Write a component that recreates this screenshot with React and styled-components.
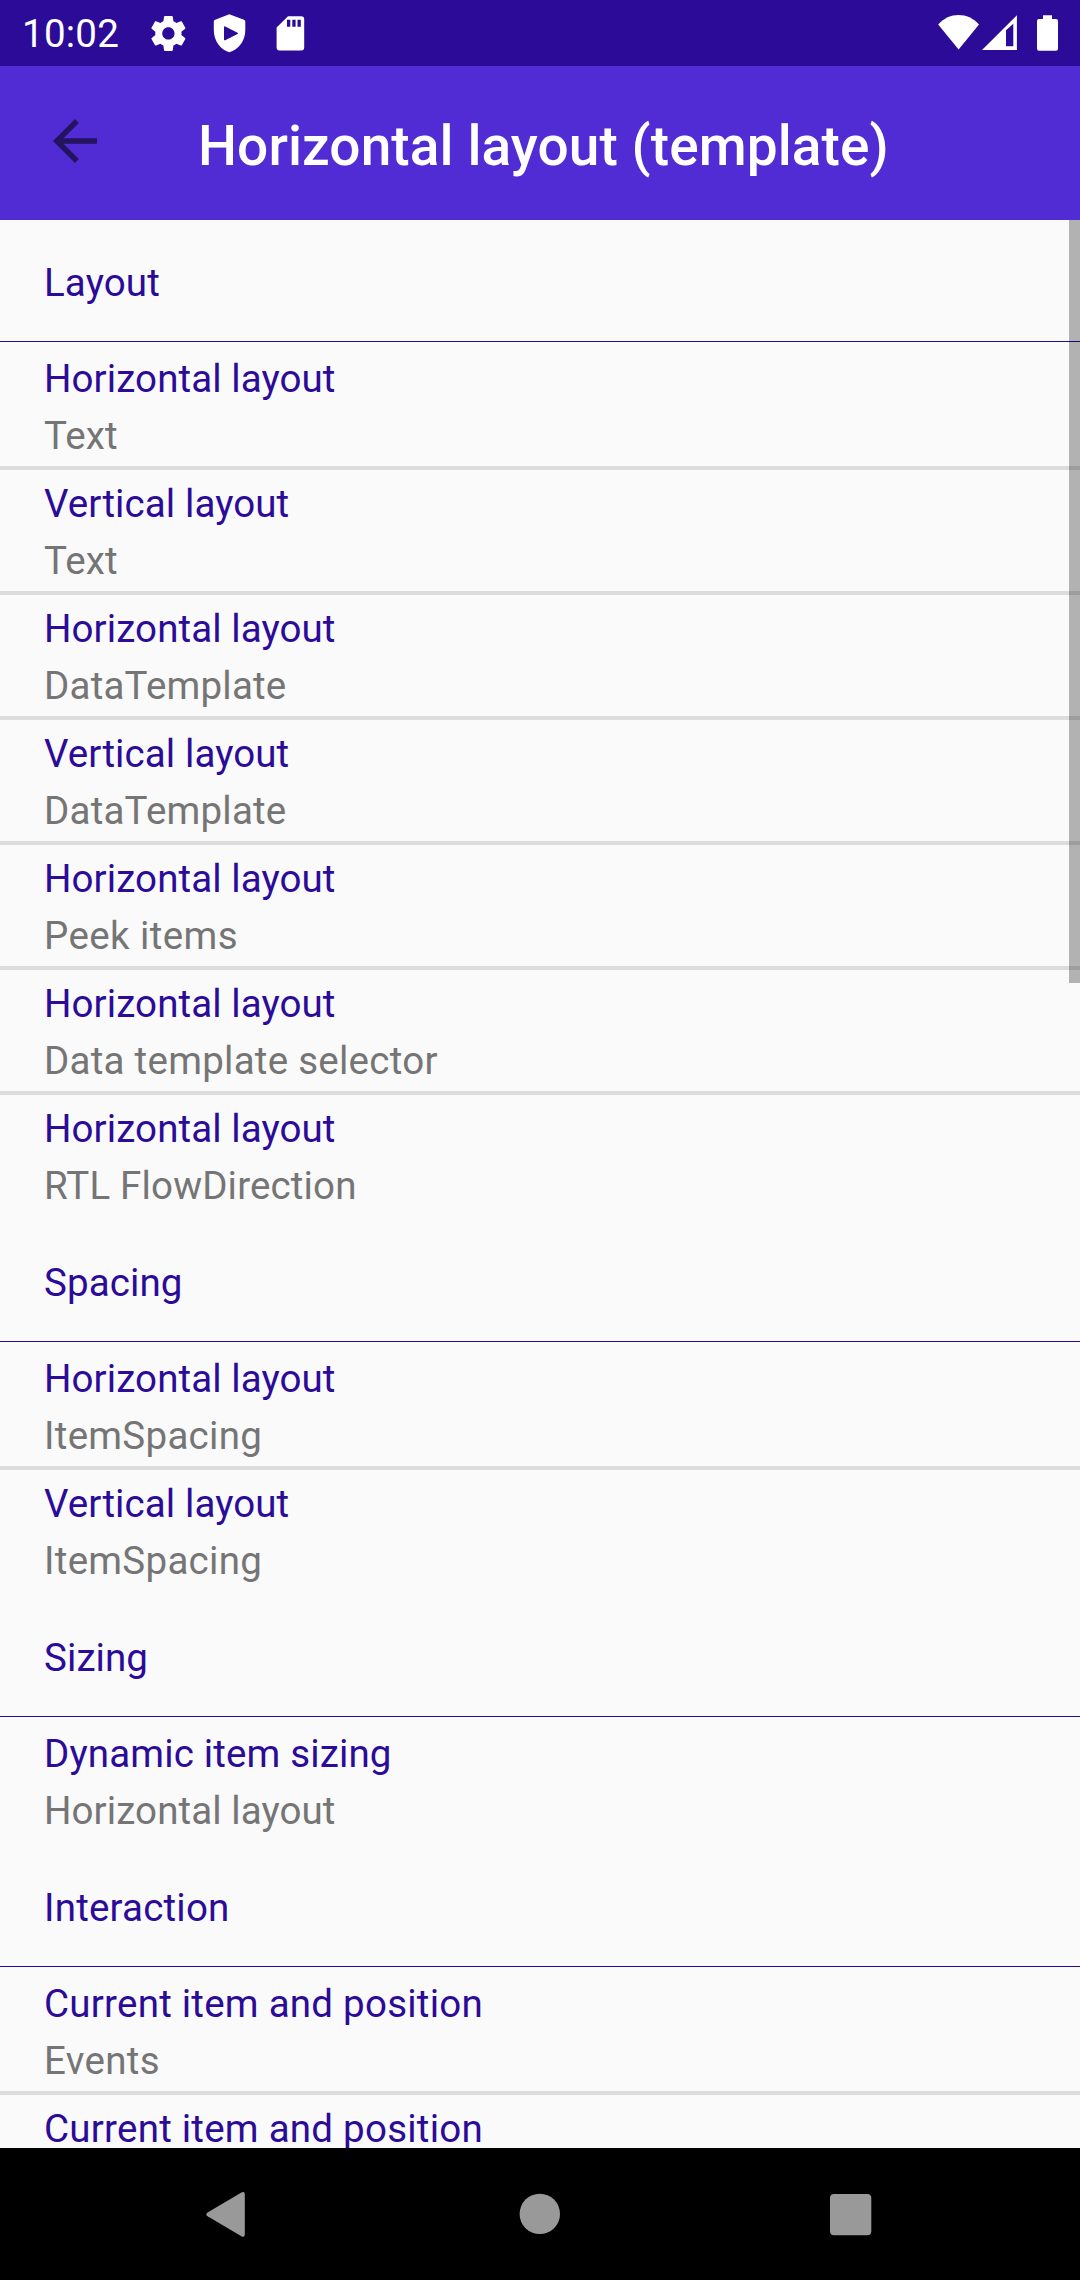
import React from "react";
import styled, { createGlobalStyle } from "styled-components";

const GlobalStyle = createGlobalStyle`
  * { box-sizing: border-box; }
  body { margin: 0; background: #000; }
`;

const Screen = styled.div`
  width: 1080px;
  height: 2280px;
  display: flex;
  flex-direction: column;
  overflow: hidden;
  background: #fafafa;
  font-family: Roboto, "Liberation Sans", sans-serif;
  font-size: 38.5px;
`;

const StatusBar = styled.header`
  flex: none;
  height: 66px;
  display: flex;
  align-items: stretch;
  justify-content: space-between;
  background: #2b0b98;
  color: #fff;
`;

const StatusGroup = styled.div`
  display: flex;
`;

const Clock = styled.time`
  width: 126px;
  padding-left: 22px;
  line-height: 68px;
  letter-spacing: 0.25px;
`;

const Icon = styled.svg`
  display: block;
  flex: none;
  fill: ${(p) => p.$color || "#fff"};
`;

const AppBar = styled.div`
  flex: none;
  height: 154px;
  display: flex;
  align-items: center;
  background: #512bd4;
`;

const BackButton = styled.button`
  display: flex;
  align-items: flex-start;
  width: 154px;
  height: 154px;
  padding: 42px 0 0 42px;
  border: 0;
  background: none;
`;

const Title = styled.h1`
  margin: 0 0 0 44px;
  font-size: 55px;
  font-weight: 500;
  line-height: 64px;
  letter-spacing: 0.09px;
  padding-top: 5px;
  color: #fff;
  white-space: nowrap;
`;

const Content = styled.main`
  position: relative;
  flex: 1;
  min-height: 0;
  overflow: hidden;
`;

const ScrollThumb = styled.div`
  position: absolute;
  top: 0;
  right: 0;
  width: 11px;
  height: 763px;
  background: rgba(0, 0, 0, 0.286);
`;

const SectionTitle = styled.h2`
  margin: 0 0 3px;
  height: 122px;
  padding: 40px 44px 0;
  border-bottom: 1px solid #2b0b98;
  font-size: inherit;
  font-weight: 400;
  line-height: 45px;
  letter-spacing: ${(p) => p.$tracking || 0}px;
  color: #2b0b98;
`;

const Row = styled.div`
  height: 125px;
  padding: 11px 44px 0;
  border-bottom: 4px solid ${(p) => (p.$last ? "transparent" : "#dcdcdc")};
`;

const RowTitle = styled.div`
  line-height: 45px;
  letter-spacing: ${(p) => p.$tracking || 0}px;
  color: #2b0b98;
`;

const RowDetail = styled.div`
  margin-top: 12px;
  line-height: 45px;
  letter-spacing: ${(p) => p.$tracking || 0}px;
  color: #757575;
`;

const NavBar = styled.nav`
  flex: none;
  height: 132px;
  display: flex;
  align-items: center;
  justify-content: center;
  gap: 251px;
  background: #000;
`;

const tracking = {
  Layout: 0.13,
  Spacing: 0.1,
  Sizing: 0.08,
  Interaction: 0.2,
  "Horizontal layout": 0.09,
  "Vertical layout": 0.1,
  "Dynamic item sizing": 0.15,
  "Current item and position": 0.24,
  Text: 0.15,
  DataTemplate: 0.21,
  "Peek items": 0.4,
  "Data template selector": 0.26,
  "RTL FlowDirection": 0.15,
  ItemSpacing: 0.28,
  Events: 0.35,
};

const sections = [
  {
    title: "Layout",
    items: [
      ["Horizontal layout", "Text"],
      ["Vertical layout", "Text"],
      ["Horizontal layout", "DataTemplate"],
      ["Vertical layout", "DataTemplate"],
      ["Horizontal layout", "Peek items"],
      ["Horizontal layout", "Data template selector"],
      ["Horizontal layout", "RTL FlowDirection"],
    ],
  },
  {
    title: "Spacing",
    items: [
      ["Horizontal layout", "ItemSpacing"],
      ["Vertical layout", "ItemSpacing"],
    ],
  },
  { title: "Sizing", items: [["Dynamic item sizing", "Horizontal layout"]] },
  {
    title: "Interaction",
    items: [
      ["Current item and position", "Events"],
      ["Current item and position", ""],
    ],
  },
];

const GearIcon = () => (
  <Icon width="66" height="66" viewBox="0 0 66 66">
    <path
      transform="translate(21.4 12.4) scale(1.75)"
      d="M19.43 12.98c.04-.32.07-.64.07-.98s-.03-.66-.07-.98l2.11-1.65c.19-.15.24-.42.12-.64l-2-3.46c-.12-.22-.39-.3-.61-.22l-2.49 1c-.52-.4-1.08-.73-1.69-.98l-.38-2.65C14.46 2.18 14.25 2 14 2h-4c-.25 0-.46.18-.49.42l-.38 2.65c-.61.25-1.17.59-1.69.98l-2.49-1c-.23-.09-.49 0-.61.22l-2 3.46c-.13.22-.07.49.12.64l2.11 1.65c-.04.32-.07.65-.07.98s.03.66.07.98l-2.11 1.65c-.19.15-.24.42-.12.64l2 3.46c.12.22.39.3.61.22l2.49-1c.52.4 1.08.73 1.69.98l.38 2.65c.03.24.24.42.49.42h4c.25 0 .46-.18.49-.42l.38-2.65c.61-.25 1.17-.59 1.69-.98l2.49 1c.23.09.49 0 .61-.22l2-3.46c.12-.22.07-.49-.12-.64l-2.11-1.65zM12 15.5c-1.93 0-3.5-1.57-3.5-3.5s1.57-3.5 3.5-3.5 3.5 1.57 3.5 3.5-1.57 3.5-3.5 3.5z"
    />
  </Icon>
);

const ShieldIcon = () => (
  <Icon width="66" height="66" viewBox="192 0 66 66">
    <path
      fillRule="evenodd"
      d="M229.3 14.2L244 19.7Q245.3 20.2 245.3 21.6V30C245.3 41 238.5 49.6 229.3 52.3C220.5 49.6 213.8 41 213.8 30V21.6Q213.8 20.2 215.1 19.7ZM224 27.2V39.4Q224 40.7 225.2 40.2L237.6 34Q238.6 33.3 237.6 32.7L225.2 26.4Q224 26 224 27.2Z"
    />
  </Icon>
);

const SdCardIcon = () => (
  <Icon width="66" height="66" viewBox="258 0 66 66">
    <path
      fillRule="evenodd"
      d="M288 16.2H301.2Q304.2 16.2 304.2 19.2V47.3Q304.2 50.5 301.2 50.5H279.6Q276.6 50.5 276.6 47.3V27.6ZM287 19.7V26.8H290.3V19.7ZM292.3 19.7V26.8H295.6V19.7ZM297.5 19.7V26.8H300.8V19.7Z"
    />
  </Icon>
);

const WifiIcon = () => (
  <Icon width="44" height="66" viewBox="937 0 44 66">
    <path d="M958.6 49.4L938.2 24.5C944 18 951 15 958.6 15S973.2 18 979 24.5Z" />
  </Icon>
);

const SignalIcon = () => (
  <Icon width="43" height="66" viewBox="981 0 43 66">
    <path fillRule="evenodd" d="M982 50L1016.9 15.2V50ZM1006 30.3V46.3H1013.3V23.8Z" />
  </Icon>
);

const BatteryIcon = () => (
  <Icon width="56" height="66" viewBox="1024 0 56 66">
    <path d="M1043 15.2H1052V19H1056Q1058 19 1058 21V48.6Q1058 50.8 1056 50.8H1039Q1037 50.8 1037 48.6V21Q1037 19 1039 19H1043Z" />
  </Icon>
);

export default function App() {
  return (
    <>
      <GlobalStyle />
      <Screen>
        <StatusBar>
          <StatusGroup>
            <Clock>10:02</Clock>
            <GearIcon />
            <ShieldIcon />
            <SdCardIcon />
          </StatusGroup>
          <StatusGroup>
            <WifiIcon />
            <SignalIcon />
            <BatteryIcon />
          </StatusGroup>
        </StatusBar>
        <AppBar>
          <BackButton aria-label="Back">
            <Icon width="66" height="66" viewBox="0 0 24 24" $color="#24135f">
              <path d="M20 11H7.83l5.59-5.59L12 4l-8 8 8 8 1.41-1.41L7.83 13H20v-2z" />
            </Icon>
          </BackButton>
          <Title>Horizontal layout (template)</Title>
        </AppBar>
        <Content>
          {sections.map((section) => (
            <section key={section.title}>
              <SectionTitle $tracking={tracking[section.title]}>{section.title}</SectionTitle>
              {section.items.map(([title, detail], i) => (
                <Row key={i} $last={i === section.items.length - 1}>
                  <RowTitle $tracking={tracking[title]}>{title}</RowTitle>
                  <RowDetail $tracking={tracking[detail]}>{detail}</RowDetail>
                </Row>
              ))}
            </section>
          ))}
          <ScrollThumb />
        </Content>
        <NavBar>
          <Icon width="60" height="60" viewBox="0 0 60 60" $color="#999">
            <path d="M42.4 8.5Q45.8 7 45.8 10.5V50.5Q45.8 54 42.4 52.3L8.6 32.3Q6 30.3 8.6 28.4Z" />
          </Icon>
          <Icon width="60" height="60" viewBox="0 0 60 60" $color="#999">
            <circle cx="29.8" cy="29.9" r="20.2" />
          </Icon>
          <Icon width="60" height="60" viewBox="0 0 60 60" $color="#999">
            <rect x="9" y="10" width="41.3" height="41.3" rx="4" />
          </Icon>
        </NavBar>
      </Screen>
    </>
  );
}
